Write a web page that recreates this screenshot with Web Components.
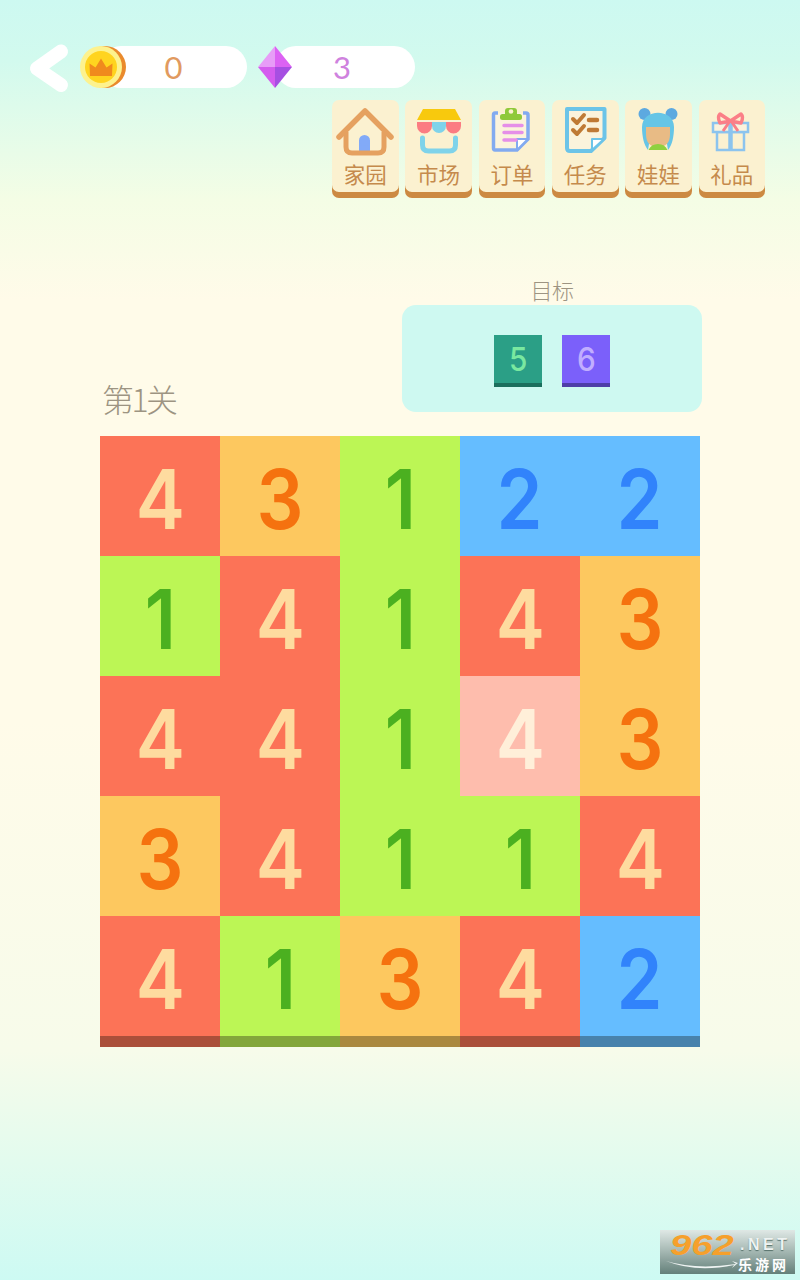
<!DOCTYPE html>
<html lang="zh">
<head>
<meta charset="utf-8">
<title>第1关</title>
<style>
  html, body { margin: 0; padding: 0; }
  body {
    width: 800px;
    height: 1280px;
    overflow: hidden;
    font-family: "Noto Sans CJK SC", sans-serif;
    background: linear-gradient(180deg, #cdf9f1 0, #d2faee 60px, #f4fde5 200px, #fffbe9 300px, #fffbe9 720px, #f7fbea 1050px, #e3fbee 1160px, #cdfaf3 1280px);
  }
  game-hud { margin-bottom: 12px; }
</style>
</head>
<body>
<game-screen>
  <game-hud>
    <back-button slot="back"></back-button>
    <hud-pill style="--pill-color:#e19a5f;--pill-width:147px;--pill-left:20px;--pad:0" value="0">
      <svg slot="icon" width="46" height="42" viewBox="0 0 46 42">
        <circle cx="25" cy="21" r="21" fill="#ea8a2c"/>
        <circle cx="21" cy="21" r="21" fill="#fdf28e"/>
        <circle cx="21" cy="21" r="16" fill="#ffd41f"/>
        <path d="M10 30 L9.500 17.500 L15.500 21.500 L21 12.500 L26.500 21.500 L32.500 17.500 L32 30 Z" fill="#f08a1d"/>
      </svg>
    </hud-pill>
    <hud-pill style="--pill-color:#cf82de;--pill-width:140px;--pill-left:17px;--pad:0 6px 0 0;margin-left:11px" value="3">
      <svg slot="icon" width="34" height="42" viewBox="0 0 34 42">
        <path d="M17 0 L0 21 L17 21 Z" fill="#e79df7"/>
        <path d="M17 0 L34 21 L17 21 Z" fill="#dc62f3"/>
        <path d="M0 21 L17 42 L17 21 Z" fill="#d45cee"/>
        <path d="M34 21 L17 42 L17 21 Z" fill="#a64fe2"/>
      </svg>
    </hud-pill>
  </game-hud>

  <tool-bar>
    <tool-button label="家园">
      <svg width="67" height="61" viewBox="0 0 67 61">
        <path d="M27 40h11v12H27z" fill="#82aaf8"/>
        <circle cx="32.500" cy="40.500" r="5.500" fill="#82aaf8"/>
        <path d="M7 37 L33 11 L59 37" fill="none" stroke="#e5a160" stroke-width="5.500" stroke-linecap="round" stroke-linejoin="round"/>
        <path d="M14 32 V47 Q14 53 20 53 H46 Q52 53 52 47 V32" fill="none" stroke="#e5a160" stroke-width="5"/>
      </svg>
    </tool-button>
    <tool-button label="市场">
      <svg width="67" height="61" viewBox="0 0 67 61">
        <path d="M18 9 H50 L56 20 H12 Z" fill="#f8c90d"/>
        <path d="M12 22 H27 V26 A7.500 7.500 0 0 1 12 26 Z" fill="#fb7c82"/>
        <path d="M27 22 H41 V26 A7 7 0 0 1 27 26 Z" fill="#7fd3ea"/>
        <path d="M41 22 H56 V26 A7.500 7.500 0 0 1 41 26 Z" fill="#fb7c82"/>
        <path d="M17.500 38 V45 Q17.500 51 23.500 51 H44.500 Q50.500 51 50.500 45 V38" fill="none" stroke="#7fd3ea" stroke-width="5" stroke-linecap="round"/>
      </svg>
    </tool-button>
    <tool-button label="订单">
      <svg width="67" height="61" viewBox="0 0 67 61">
        <path d="M20 13 H17 Q15.500 13 15.500 15 V48 Q15.500 50 17 50 H39 L50 39 V15 Q50 13 48 13 H45" fill="#fbf3dc" stroke="#82aaf0" stroke-width="3.500"/>
        <path d="M39 50 V39 H50 Z" fill="#fff" stroke="#82aaf0" stroke-width="2" stroke-linejoin="round"/>
        <rect x="22" y="14" width="22" height="6" rx="2.500" fill="#8fc93a"/>
        <rect x="27" y="8" width="12" height="9" rx="3" fill="#8fc93a"/>
        <circle cx="33" cy="11.500" r="2.300" fill="#fbf1d0"/>
        <path d="M26 25.500 H44 M26 32.500 H44 M26 40 H38" stroke="#e58fe8" stroke-width="3.500" stroke-linecap="round"/>
      </svg>
    </tool-button>
    <tool-button label="任务">
      <svg width="67" height="61" viewBox="0 0 67 61">
        <path d="M15 9 H52.500 V38 L39 51 H18 Q15 51 15 48 Z" fill="#fbf3dc" stroke="#6cc4e8" stroke-width="4" stroke-linejoin="round"/>
        <path d="M40 50 V39 H52 Z" fill="#fff" stroke="#6cc4e8" stroke-width="2" stroke-linejoin="round"/>
        <path d="M21 19 L25 23 L32 15 M21 30 L25 34 L32 26" fill="none" stroke="#bf7a35" stroke-width="4" stroke-linecap="round" stroke-linejoin="round"/>
        <path d="M37 20 H45 M37 30 H45" stroke="#bf7a35" stroke-width="4.500" stroke-linecap="round"/>
      </svg>
    </tool-button>
    <tool-button label="娃娃">
      <svg width="67" height="61" viewBox="0 0 67 61">
        <circle cx="19.500" cy="14" r="6" fill="#5da9e0"/>
        <circle cx="46.500" cy="14" r="6" fill="#5da9e0"/>
        <path d="M17 27 C17 8 49 8 49 27 C49 37 47 45 43 50 L42 44 H24 L23 50 C19 45 17 37 17 27 Z" fill="#66c5e6"/>
        <path d="M21 27 H45 V34 Q45 47 33 47 Q21 47 21 34 Z" fill="#e8bb85"/>
        <path d="M23.500 50 Q26 44 33 44 Q40 44 42.500 50 Z" fill="#8fd13f"/>
      </svg>
    </tool-button>
    <tool-button label="礼品">
      <svg width="67" height="61" viewBox="0 0 67 61">
        <path d="M19 32 H46 V50 H19 Z" fill="none" stroke="#8cc4ee" stroke-width="2.500"/>
        <path d="M15 23 H50 V32 H15 Z" fill="#fbf3dc" stroke="#8cc4ee" stroke-width="2.500"/>
        <path d="M32.500 23 V50" stroke="#8cc4ee" stroke-width="4.500"/>
        <path d="M32.500 21 L22 14 Q19 17 22 23 Z M32.500 21 L43 14 Q46 17 43 23 Z" fill="none" stroke="#fb7f87" stroke-width="3.500" stroke-linejoin="round"/>
        <path d="M32 21 L25 31 M33 21 L40 31" stroke="#fb7f87" stroke-width="3"/>
      </svg>
    </tool-button>
  </tool-bar>

  <level-row>
    <span slot="level">第1关</span>
    <goal-panel label="目标">
      <goal-tile style="--tile:#2b9f86;--tile-edge:#1b6f5d;--tile-ink:#7ae8a0">5</goal-tile>
      <goal-tile style="--tile:#7b60fa;--tile-edge:#4e3ea8;--tile-ink:#c1aeff">6</goal-tile>
    </goal-panel>
  </level-row>

  <game-board rows="43122,14143,44143,34114,41342" pale="2,3"></game-board>
</game-screen>

<site-mark></site-mark>

<script>
class GameScreen extends HTMLElement {
  constructor() {
    super();
    this.attachShadow({ mode: 'open' }).innerHTML = `
      <style>
        :host { display: flex; flex-direction: column; padding-top: 46px; }
      </style>
      <slot></slot>`;
  }
}

class GameHud extends HTMLElement {
  constructor() {
    super();
    this.attachShadow({ mode: 'open' }).innerHTML = `
      <style>
        :host { display: flex; align-items: center; height: 42px; padding-left: 30px; }
      </style>
      <slot name="back"></slot>
      <slot></slot>`;
  }
}

class BackButton extends HTMLElement {
  constructor() {
    super();
    this.attachShadow({ mode: 'open' }).innerHTML = `
      <style>
        :host { display: flex; width: 50px; height: 42px; align-items: center; overflow: visible; }
        svg { flex: none; overflow: visible; }
      </style>
      <svg width="40" height="50" viewBox="0 0 40 50">
        <path d="M31 9.500 L7 26.500 L31 43" fill="none" stroke="#fff" stroke-width="14" stroke-linecap="round" stroke-linejoin="round"/>
      </svg>`;
  }
}

class HudPill extends HTMLElement {
  constructor() {
    super();
    this.attachShadow({ mode: 'open' }).innerHTML = `
      <style>
        :host { display: block; position: relative; height: 42px; width: calc(var(--pill-width) + var(--pill-left)); }
        .track {
          box-sizing: border-box;
          height: 42px;
          width: var(--pill-width);
          margin-left: var(--pill-left);
          border-radius: 21px;
          background: #fff;
          display: flex;
          align-items: center;
          justify-content: center;
          padding: var(--pad);
          color: var(--pill-color);
          font: 400 31px Lato, "Noto Sans", sans-serif;
        }
        .icon { position: absolute; left: 0; top: 0; height: 42px; }
        ::slotted(svg) { display: block; }
      </style>
      <div class="track"></div>
      <div class="icon"><slot name="icon"></slot></div>`;
  }
  connectedCallback() {
    this.shadowRoot.querySelector('.track').textContent = this.getAttribute('value');
  }
}

class ToolBar extends HTMLElement {
  constructor() {
    super();
    this.attachShadow({ mode: 'open' }).innerHTML = `
      <style>
        :host { display: flex; justify-content: flex-end; gap: 6.670px; padding-right: 34.800px; }
      </style>
      <slot></slot>`;
  }
}

class ToolButton extends HTMLElement {
  constructor() {
    super();
    this.attachShadow({ mode: 'open' }).innerHTML = `
      <style>
        :host {
          display: flex;
          flex-direction: column;
          align-items: center;
          box-sizing: border-box;
          width: 66.670px;
          height: 98px;
          border-radius: 7px;
          background: #fbf1d0;
          box-shadow: inset 0 -6px 0 #cc8a42;
        }
        .art { height: 61px; }
        ::slotted(svg) { display: block; }
        .label { font-size: 21.500px; line-height: 26px; color: #c58a4c; font-weight: 400; }
      </style>
      <div class="art"><slot></slot></div>
      <div class="label"></div>`;
  }
  connectedCallback() {
    this.shadowRoot.querySelector('.label').textContent = this.getAttribute('label');
  }
}

class LevelRow extends HTMLElement {
  constructor() {
    super();
    this.attachShadow({ mode: 'open' }).innerHTML = `
      <style>
        :host { display: flex; justify-content: space-between; align-items: flex-end; padding: 78px 98px 0 102px; margin-bottom: 24px; }
        .level { font-size: 32px; line-height: 38px; font-weight: 300; color: #9d9482; letter-spacing: -2.500px; margin-bottom: -5px; }
      </style>
      <div class="level"><slot name="level"></slot></div>
      <slot></slot>`;
  }
}

class GoalPanel extends HTMLElement {
  constructor() {
    super();
    this.attachShadow({ mode: 'open' }).innerHTML = `
      <style>
        :host { display: block; width: 300px; }
        .label { text-align: center; font-size: 22px; line-height: 27px; margin-bottom: 2px; font-weight: 300; color: #9d9482; letter-spacing: -0.500px; }
        .panel {
          height: 107px;
          box-sizing: border-box;
          padding: 30px 92px 0;
          border-radius: 14px;
          background: #cef9f1;
          display: flex;
          gap: 20px;
        }
      </style>
      <div class="label"></div>
      <div class="panel"><slot></slot></div>`;
  }
  connectedCallback() {
    this.shadowRoot.querySelector('.label').textContent = this.getAttribute('label');
  }
}

class GoalTile extends HTMLElement {
  constructor() {
    super();
    this.attachShadow({ mode: 'open' }).innerHTML = `
      <style>
        :host {
          display: flex;
          align-items: center;
          justify-content: center;
          box-sizing: border-box;
          width: 48px;
          height: 52px;
          padding-bottom: 4px;
          background: var(--tile);
          box-shadow: inset 0 -4px 0 var(--tile-edge);
          color: var(--tile-ink);
          font: 500 33px Inter, sans-serif;
        }
        span { display: block; transform: scaleX(.9); }
      </style>
      <span><slot></slot></span>`;
  }
}

const CELL_COLORS = {
  1: ['#bcf655', '#4bb020', '#83a63b'],
  2: ['#65bdff', '#3183fb', '#4882ac'],
  3: ['#fdc85f', '#f5720f', '#aa883f'],
  4: ['#fc7357', '#fedb9f', '#aa4f3a']
};

class GameBoard extends HTMLElement {
  constructor() {
    super();
    this.attachShadow({ mode: 'open' }).innerHTML = `
      <style>
        :host { display: grid; grid-template-columns: repeat(5, 120px); grid-auto-rows: 120px; width: 600px; margin-left: 100px; }
      </style>`;
  }
  connectedCallback() {
    const rows = this.getAttribute('rows').split(',');
    const pale = this.getAttribute('pale');
    rows.forEach((row, r) => {
      [...row].forEach((n, c) => {
        const cell = document.createElement('board-cell');
        cell.textContent = n;
        const colors = CELL_COLORS[n];
        cell.style.setProperty('--cell', colors[0]);
        cell.style.setProperty('--ink', colors[1]);
        if (pale === r + ',' + c) {
          cell.style.setProperty('--cell', '#febdad');
          cell.style.setProperty('--ink', '#ffefd9');
        }
        if (r === rows.length - 1) {
          cell.style.setProperty('--edge', colors[2]);
          cell.setAttribute('last', '');
        }
        this.shadowRoot.appendChild(cell);
      });
    });
  }
}

class BoardCell extends HTMLElement {
  constructor() {
    super();
    this.attachShadow({ mode: 'open' }).innerHTML = `
      <style>
        :host {
          display: flex;
          align-items: center;
          justify-content: center;
          position: relative;
          background: var(--cell);
          color: var(--ink);
          font: 600 82px Inter, sans-serif;
          padding-top: 7px;
          box-sizing: border-box;
        }
        :host([last]) { box-shadow: 0 11px 0 var(--edge); }
        span { display: block; transform: scaleX(.9); }
      </style>
      <span><slot></slot></span>`;
  }
}

class SiteMark extends HTMLElement {
  constructor() {
    super();
    this.attachShadow({ mode: 'open' }).innerHTML = `
      <style>
        :host {
          position: absolute;
          left: 660px;
          top: 1230px;
          width: 135px;
          height: 44px;
          box-sizing: border-box;
          padding-left: 10px;
          display: grid;
          grid-template-columns: 70px 1fr;
          grid-template-rows: 26px 18px;
          background: linear-gradient(180deg, #dfe8e5 0, #a9bbb6 45%, #64807a 100%);
          overflow: hidden;
        }
        .num {
          grid-row: 1 / 3;
          font: italic 700 29px/30px "Liberation Sans", sans-serif;
          color: #f6a02c;
          transform: scaleX(1.320);
          transform-origin: 0 0;
        }
        .swoosh { position: absolute; left: 6px; bottom: 3px; }
        .net { font: 700 16px/29px "Liberation Sans", sans-serif; color: #eef3f2; letter-spacing: 3.500px; text-shadow: 0 1px 1px #55706a; }
        .cn { margin-left: -2px; font: 700 14px/16px "Noto Sans CJK SC", sans-serif; color: #fff; letter-spacing: 3px; }
      </style>
      <div class="num">962</div>
      <div class="net">.NET</div>
      <div class="cn">乐游网</div>
      <svg class="swoosh" width="72" height="12" viewBox="0 0 72 12">
        <path d="M0 2 Q30 11 70 5 L66 2 L72 4 L66 9 L68 6 Q30 14 0 2 Z" fill="#eef3f2"/>
      </svg>`;
  }
}

customElements.define('game-screen', GameScreen);
customElements.define('game-hud', GameHud);
customElements.define('back-button', BackButton);
customElements.define('hud-pill', HudPill);
customElements.define('tool-bar', ToolBar);
customElements.define('tool-button', ToolButton);
customElements.define('level-row', LevelRow);
customElements.define('goal-panel', GoalPanel);
customElements.define('goal-tile', GoalTile);
customElements.define('game-board', GameBoard);
customElements.define('board-cell', BoardCell);
customElements.define('site-mark', SiteMark);
</script>
</body>
</html>
